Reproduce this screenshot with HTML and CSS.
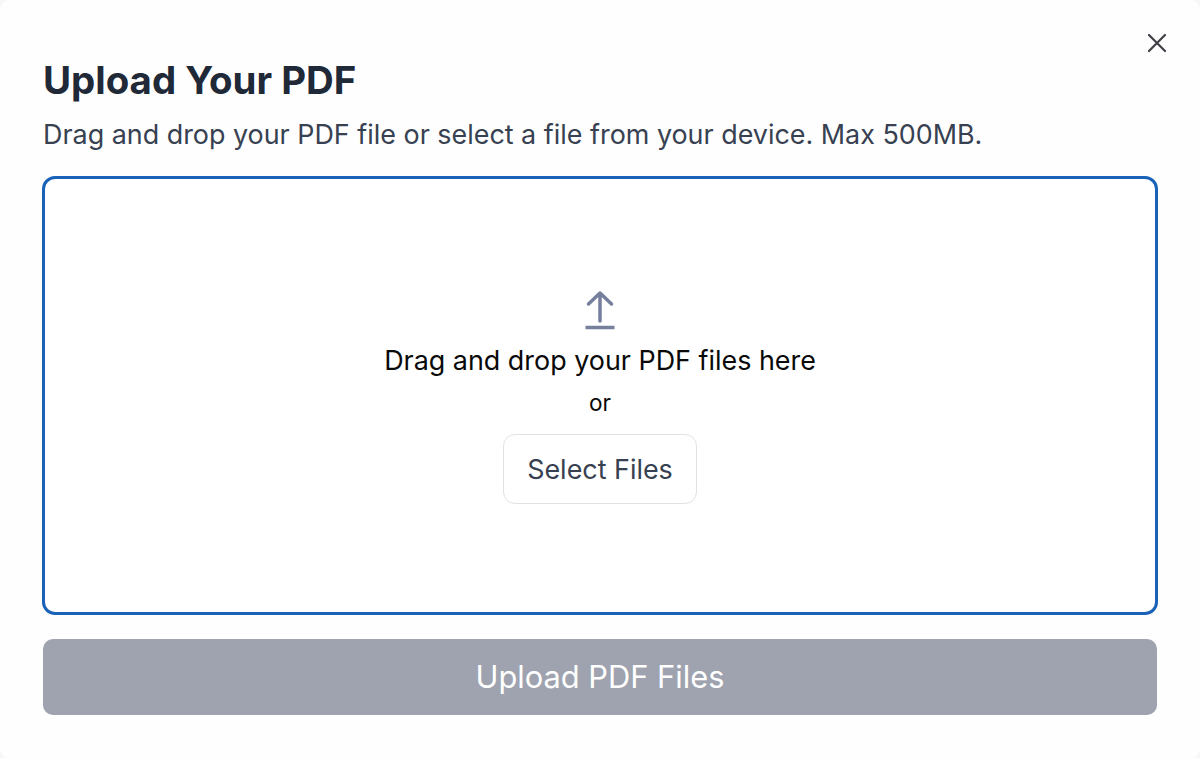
FILE: index.html
```html
<!DOCTYPE html>
<html lang="en">
<head>
    <meta charset="UTF-8">
    <meta name="viewport" content="width=device-width, initial-scale=1.0">
    <title>Upload Your PDF</title>

    <link rel="stylesheet" href="styles.css">
</head>
<body>
    <div class="modal">
        <button class="close" aria-label="Close">
            <svg width="20" height="20" viewBox="0 0 20 20" fill="none" stroke="#3f3f46" stroke-width="2.2" stroke-linecap="round">
                <path d="M2 2 L18 18 M18 2 L2 18"/>
            </svg>
        </button>
        <h1 class="title">Upload Your PDF</h1>
        <p class="subtitle">Drag and drop your PDF file or select a file from your device. Max 500MB.</p>
        <div class="dropzone">
            <svg class="upload-icon" width="32" height="40" viewBox="0 0 32 40" fill="none" stroke="#767f9c" stroke-width="3.5" stroke-linecap="round" stroke-linejoin="round">
                <path d="M16 31 V3 M4.500 14 L16 3 L27.500 14"/>
                <path d="M1.500 37.500 H30.500" stroke-linecap="butt"/>
            </svg>
            <p class="drop-text">Drag and drop your PDF files here</p>
            <p class="or">or</p>
            <button class="select">Select Files</button>
        </div>
        <button class="upload">Upload PDF Files</button>
    </div>
</body>
</html>
```

FILE: styles.css
```css
*, *:before, *:after{
    margin: 0;
    padding: 0;
    box-sizing: border-box;
}
body{
    height: 758px;
    overflow: hidden;
    background: #f7f7f8;
    font-family: Inter, "Liberation Sans", sans-serif;
}
.modal{
    position: relative;
    height: 758px;
    padding: 58px 42px 0 42px;
    background: #fefefe;
    border-radius: 10px;
}
.close{
    position: absolute;
    top: 33px;
    right: 33px;
    width: 20px;
    height: 20px;
    border: none;
    background: none;
    display: flex;
}
.title{
    margin-left: 1px;
    font-size: 38.4px;
    line-height: 44px;
    font-weight: 700;
    color: #1f2937;
}
.subtitle{
    margin: 15px 0 0 1px;
    font-size: 26.9px;
    line-height: 34px;
    color: #374151;
}
.dropzone{
    margin-top: 25px;
    height: 439px;
    border: 3px solid #1a62b8;
    border-radius: 13px;
    background: #fff;
    display: flex;
    flex-direction: column;
    align-items: center;
    padding-top: 111px;
}
.drop-text{
    margin-top: 10px;
    font-size: 26.9px;
    line-height: 40px;
    color: #0a0a0a;
}
.or{
    margin-top: 8px;
    font-size: 22.5px;
    line-height: 30px;
    color: #0a0a0a;
}
.select{
    margin-top: 16px;
    width: 194px;
    height: 70px;
    border: 1px solid #e0e2e6;
    border-radius: 12px;
    background: #fff;
    font-family: inherit;
    font-size: 26.9px;
    color: #374151;
}
.upload{
    display: block;
    width: calc(100% - 2px);
    height: 76px;
    margin: 24px 1px 0;
    padding-bottom: 2px;
    border: none;
    border-radius: 10px;
    background: #9ea3af;
    font-family: inherit;
    font-size: 30.8px;
    font-weight: 400;
    color: #fff;
}
```
